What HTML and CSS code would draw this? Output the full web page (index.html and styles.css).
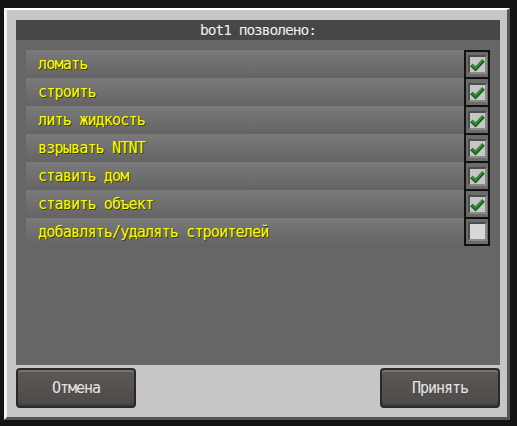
FILE: index.html
```html
<!DOCTYPE html>
<html lang="ru">
<head>
  <meta charset="UTF-8" />
  <title>bot1 позволено</title>
  <link rel="stylesheet" href="styles.css">
</head>
<body>
  <div class="panel">
    <div class="dialog">
      <div class="dialog-title">bot1 позволено:</div>
      <div class="dialog-body">
        <div class="row">
          <div class="label">ломать</div>
          <div class="box-cell"><div class="box"><div class="tick checked">
            <svg viewBox="0 0 15 15" width="15" height="15"><polyline points="1.5,8 5.5,12 13.5,3.5" fill="none" stroke="#17561a" stroke-width="3.6"/><polyline points="2,7.5 5.5,11 13,3" fill="none" stroke="#2f8f33" stroke-width="2"/></svg>
          </div></div></div>
        </div>
        <div class="row">
          <div class="label">строить</div>
          <div class="box-cell"><div class="box"><div class="tick checked">
            <svg viewBox="0 0 15 15" width="15" height="15"><polyline points="1.5,8 5.5,12 13.5,3.5" fill="none" stroke="#17561a" stroke-width="3.6"/><polyline points="2,7.5 5.5,11 13,3" fill="none" stroke="#2f8f33" stroke-width="2"/></svg>
          </div></div></div>
        </div>
        <div class="row">
          <div class="label">лить жидкость</div>
          <div class="box-cell"><div class="box"><div class="tick checked">
            <svg viewBox="0 0 15 15" width="15" height="15"><polyline points="1.5,8 5.5,12 13.5,3.5" fill="none" stroke="#17561a" stroke-width="3.6"/><polyline points="2,7.5 5.5,11 13,3" fill="none" stroke="#2f8f33" stroke-width="2"/></svg>
          </div></div></div>
        </div>
        <div class="row">
          <div class="label">взрывать NTNT</div>
          <div class="box-cell"><div class="box"><div class="tick checked">
            <svg viewBox="0 0 15 15" width="15" height="15"><polyline points="1.5,8 5.5,12 13.5,3.5" fill="none" stroke="#17561a" stroke-width="3.6"/><polyline points="2,7.5 5.5,11 13,3" fill="none" stroke="#2f8f33" stroke-width="2"/></svg>
          </div></div></div>
        </div>
        <div class="row">
          <div class="label">ставить дом</div>
          <div class="box-cell"><div class="box"><div class="tick checked">
            <svg viewBox="0 0 15 15" width="15" height="15"><polyline points="1.5,8 5.5,12 13.5,3.5" fill="none" stroke="#17561a" stroke-width="3.6"/><polyline points="2,7.5 5.5,11 13,3" fill="none" stroke="#2f8f33" stroke-width="2"/></svg>
          </div></div></div>
        </div>
        <div class="row">
          <div class="label">ставить объект</div>
          <div class="box-cell"><div class="box"><div class="tick checked">
            <svg viewBox="0 0 15 15" width="15" height="15"><polyline points="1.5,8 5.5,12 13.5,3.5" fill="none" stroke="#17561a" stroke-width="3.6"/><polyline points="2,7.5 5.5,11 13,3" fill="none" stroke="#2f8f33" stroke-width="2"/></svg>
          </div></div></div>
        </div>
        <div class="row">
          <div class="label">добавлять/удалять строителей</div>
          <div class="box-cell"><div class="box"><div class="tick"></div></div></div>
        </div>
      </div>
    </div>
    <div class="actions">
      <button class="btn">Отмена</button>
      <button class="btn">Принять</button>
    </div>
  </div>
</body>
</html>
```

FILE: styles.css
```css
/* base */
* {
  box-sizing: border-box;
}
body {
  margin: 0;
  padding: 8px 0 0 4px;
  height: 426px;
  overflow: hidden;
  background: #141414;
  font-family: "DejaVu Sans Mono", monospace;
}

/* outer grey frame */
.panel {
  width: 506px;
  height: 412px;
  background: #c6c6c6;
  border-top: 2px solid #ffffff;
  border-left: 3px solid #f4f4f4;
  border-right: 3px solid #555555;
  border-bottom: 3px solid #555555;
  padding: 10px 7px 9px 9px;
  display: flex;
  flex-direction: column;
  gap: 3px;
}

.dialog {
  height: 345px;
  background: #666666;
  display: flex;
  flex-direction: column;
}
.dialog-title {
  height: 20px;
  background: #474747;
  color: #f2f2f2;
  font-size: 14.5px;
  letter-spacing: -1px;
  line-height: 20px;
  text-align: center;
}
.dialog-body {
  padding: 10px;
  display: flex;
  flex-direction: column;
}

/* permission rows */
.row {
  display: flex;
  height: 28px;
}
.label {
  flex: 1;
  background: linear-gradient(#7a7a7a, #646464);
  color: #fcfc00;
  text-shadow: 1px 1px 0 #3f3f00;
  font-size: 15px;
  letter-spacing: -0.8px;
  line-height: 28px;
  padding-left: 12px;
}
.box-cell {
  width: 26px;
  background: #111111;
  padding: 1px 2px;
}
.row:first-child .box-cell {
  padding-top: 2px;
}
.row:last-child .box-cell {
  padding-bottom: 2px;
}
.box {
  height: 100%;
  background: #6b6b6b;
  display: flex;
  align-items: center;
  justify-content: center;
}
.tick {
  width: 19px;
  height: 19px;
  background: #d8d8d8;
  border: 2px solid;
  border-color: #4e4e4e #8a8a8a #8a8a8a #4e4e4e;
  display: flex;
}
.tick.checked {
  background: #c6c6c6;
}

/* bottom buttons */
.actions {
  display: flex;
  justify-content: space-between;
}
.btn {
  width: 120px;
  height: 40px;
  border: 2px solid #2c2a29;
  border-radius: 4px;
  background: linear-gradient(#5e5957, #4d4947);
  box-shadow: inset 0 2px 0 #7b7572, inset 0 -2px 0 #403c3a;
  color: #e4e4e4;
  font-family: "DejaVu Sans Mono", monospace;
  font-size: 15px;
  letter-spacing: -1px;
  padding: 0;
  cursor: pointer;
}
```
